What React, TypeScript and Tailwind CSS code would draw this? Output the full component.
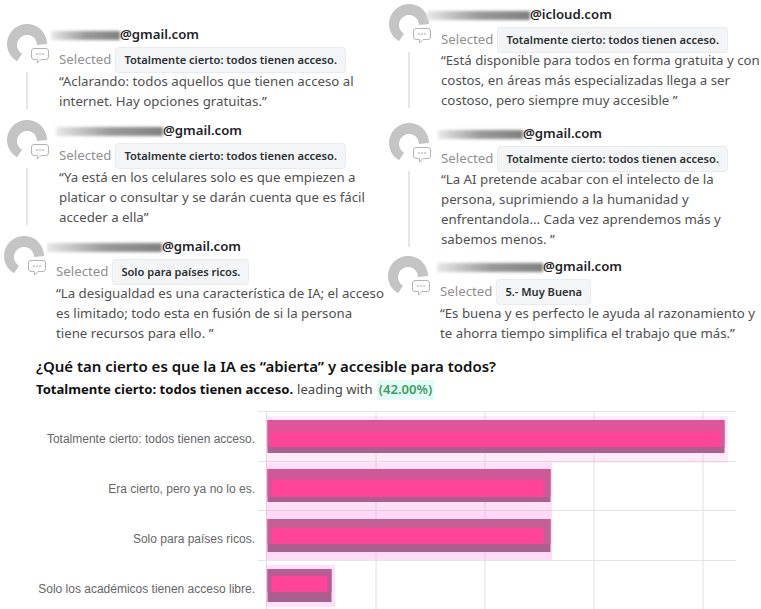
const sans = "font-['Noto_Sans',sans-serif]";

interface Response {
    wrap: string;
    nameOffset: string;
    blurWidth: string;
    quoteGap: string;
    domain: string;
    choice: string;
    quote: string[];
    thread?: boolean;
}

const leftColumn: Response[] = [
    {
        wrap: "ml-[7px] mb-[9px]",
        nameOffset: "-ml-[8px]",
        blurWidth: "w-[69px]",
        quoteGap: "-mt-[2px]",
        domain: "@gmail.com",
        choice: "Totalmente cierto: todos tienen acceso.",
        quote: ["“Aclarando: todos aquellos que tienen acceso al", "internet. Hay opciones gratuitas.”"],
        thread: true,
    },
    {
        wrap: "ml-[7px] mb-[9px]",
        nameOffset: "-ml-[3px]",
        blurWidth: "w-[107px]",
        quoteGap: "-mt-[2px]",
        domain: "@gmail.com",
        choice: "Totalmente cierto: todos tienen acceso.",
        quote: [
            "“Ya está en los celulares solo es que empiezen a",
            "platicar o consultar y se darán cuenta que es fácil",
            "acceder a ella”",
        ],
        thread: true,
    },
    {
        wrap: "ml-[4px]",
        nameOffset: "-ml-[9px]",
        blurWidth: "w-[115px]",
        quoteGap: "-mt-[2px]",
        domain: "@gmail.com",
        choice: "Solo para países ricos.",
        quote: [
            "“La desigualdad es una característica de IA; el acceso",
            "es limitado; todo esta en fusión de si la persona",
            "tiene recursos para ello. ”",
        ],
    },
];

const rightColumn: Response[] = [
    {
        wrap: "ml-[389px] mb-[13px]",
        nameOffset: "-ml-[14px]",
        blurWidth: "w-[103px]",
        quoteGap: "-mt-[3px]",
        domain: "@icloud.com",
        choice: "Totalmente cierto: todos tienen acceso.",
        quote: [
            "“Está disponible para todos en forma gratuita y con",
            "costos, en áreas más especializadas llega a ser",
            "costoso, pero siempre muy accesible ”",
        ],
        thread: true,
    },
    {
        wrap: "ml-[389px] mb-[7px]",
        nameOffset: "-ml-[3px]",
        blurWidth: "w-[85px]",
        quoteGap: "-mt-[3px]",
        domain: "@gmail.com",
        choice: "Totalmente cierto: todos tienen acceso.",
        quote: [
            "“La AI pretende acabar con el intelecto de la",
            "persona, suprimiendo a la humanidad y",
            "enfrentandola... Cada vez aprendemos más y",
            "sabemos menos. ”",
        ],
        thread: true,
    },
    {
        wrap: "ml-[388px]",
        nameOffset: "-ml-[3px]",
        blurWidth: "w-[106px]",
        quoteGap: "-mt-[2px]",
        domain: "@gmail.com",
        choice: "5.- Muy Buena",
        quote: [
            "“Es buena y es perfecto le ayuda al razonamiento y",
            "te ahorra tiempo simplifica el trabajo que más.”",
        ],
    },
];

function Avatar() {
    return (
        <div className="relative h-10 w-10 shrink-0">
            <svg viewBox="0 0 40 40" className="h-10 w-10">
                <path d="M40 20A20 20 0 1 0 10 37.3L15 29.700A10 10 0 1 1 30 21Z" fill="#c4c4c4" />
            </svg>
            <svg viewBox="0 0 20 18" className="absolute left-[23px] top-[23px] h-[18px] w-[20px]">
                <path
                    d="M4 1.500h12a2.500 2.500 0 0 1 2.500 2.500v6a2.500 2.500 0 0 1-2.500 2.500h-5l-3.500 3.500v-3.500H4A2.500 2.500 0 0 1 1.500 10V4A2.500 2.500 0 0 1 4 1.500Z"
                    fill="#ffffff"
                    stroke="#b5b5b5"
                />
                <circle cx="7" cy="7" r="0.8" fill="#9a9a9a" />
                <circle cx="10" cy="7" r="0.8" fill="#9a9a9a" />
                <circle cx="13" cy="7" r="0.8" fill="#9a9a9a" />
            </svg>
        </div>
    );
}

function ResponseItem({ item }: { item: Response }) {
    return (
        <div className={`flex ${item.wrap}`}>
            <div className="flex w-10 shrink-0 flex-col items-center">
                <Avatar />
                {item.thread && <div className="mt-2 mb-[2px] w-[2px] flex-1 bg-[#e6e6e6]" />}
            </div>
            <div className="ml-3 min-w-0 pt-[1px]">
                <div className={`flex h-5 items-center ${item.nameOffset}`}>
                    <div className={`relative z-10 h-[9px] bg-gradient-to-r from-[#e8e8e8] via-[#9a9a9a] to-[#808080] blur-[1.5px] ${item.blurWidth}`} />
                    <span className="relative z-10 text-[13.2px] font-semibold text-[#1f2328]">{item.domain}</span>
                </div>
                <div className="mt-[2px] flex h-[26px] items-center whitespace-nowrap">
                    <span className="text-[13.25px] text-[#909090]">Selected</span>
                    <span className="ml-[4px] flex h-[26px] items-center rounded border border-[#e8ebef] bg-[#f3f5f7] px-2 text-[11.1px] font-semibold text-[#2b2f33]">
                        {item.choice}
                    </span>
                </div>
                <div className={`text-[13.25px] leading-5 whitespace-nowrap text-[#505050] ${item.quoteGap}`}>
                    {item.quote.map((line) => (
                        <div key={line}>{line}</div>
                    ))}
                </div>
            </div>
        </div>
    );
}

const labels = [
    "Totalmente cierto: todos tienen acceso.",
    "Era cierto, pero ya no lo es.",
    "Solo para países ricos.",
    "Solo los académicos tienen acceso libre.",
];

// y, height and bands are all measured from the top of the plot
const bars = [
    { y: 9, width: 457, top: 12, pink: 15, rightBand: 5, tone: "#e0559a", haloY: 5, haloH: 47, haloW: 462, halo: 0.15 },
    { y: 58, width: 283, top: 11, pink: 17, rightBand: 7, tone: "#cf5898", haloY: 52, haloH: 47, haloW: 286, halo: 0.22 },
    { y: 108, width: 283, top: 9, pink: 16, rightBand: 7, tone: "#c56097", haloY: 99, haloH: 50, haloW: 286, halo: 0.25 },
    { y: 158, width: 64, top: 7, pink: 16, rightBand: 4, tone: "#b85c94", haloY: 154, haloH: 42, haloW: 69, halo: 0.2 },
];

function PlotArea() {
    return (
        <svg width="478" height="198" className="block shrink-0">
            {[0, 50, 99, 149].map((y) => (
                <line key={y} x1="0" x2="478" y1={y + 0.5} y2={y + 0.5} stroke="#e5e5e5" />
            ))}
            {[8.5, 118, 227, 336, 445].map((x) => (
                <line key={x} x1={x} x2={x} y1="0" y2="198" stroke="#e2e2e2" />
            ))}
            {bars.map((bar) => (
                <g key={bar.y}>
                    <rect x="8" y={bar.haloY} width={bar.haloW} height={bar.haloH} fill="#ff6fe0" fillOpacity={bar.halo} />
                    <rect x="9.5" y={bar.y} width={bar.width} height="33" fill="#a8608f" />
                    <rect x="9.5" y={bar.y} width={bar.width} height={bar.top + bar.pink} fill={bar.tone} />
                    <rect
                        x="13.5"
                        y={bar.y + bar.top}
                        width={bar.width - 4 - bar.rightBand}
                        height={bar.pink}
                        fill="#ff4499"
                    />
                </g>
            ))}
        </svg>
    );
}

export default function App() {
    return (
        <div className={`h-[609px] w-[761px] overflow-hidden bg-white ${sans}`}>
            <div className="relative h-[352px]">
                <div className="absolute top-[24px] left-0">
                    {leftColumn.map((item) => (
                        <ResponseItem key={item.quote[0]} item={item} />
                    ))}
                </div>
                <div className="absolute top-[4px] left-0">
                    {rightColumn.map((item) => (
                        <ResponseItem key={item.quote[0]} item={item} />
                    ))}
                </div>
            </div>
            <div className="pl-9">
                <h2 className="h-[28px] text-[15px] leading-[28px] font-semibold text-[#111]">
                    ¿Qué tan cierto es que la IA es “abierta” y accesible para todos?
                </h2>
                <p className="flex h-[20px] items-center text-[13.1px]">
                    <span className="font-bold text-[#111]">Totalmente cierto: todos tienen acceso.</span>
                    <span className="ml-1 text-[#444]">leading with</span>
                    <span className="ml-1 bg-[#e2fbf6] px-[2px] font-semibold text-[#3f9b5f]">(42.00%)</span>
                </p>
            </div>
            <div className="mt-[11px] flex">
                <div className="w-[255px] shrink-0 pt-[3px] font-['Liberation_Sans',sans-serif] text-xs text-[#666666]">
                    {labels.map((label) => (
                        <div key={label} className="flex h-[50px] items-center justify-end whitespace-nowrap">
                            {label}
                        </div>
                    ))}
                </div>
                <div className="ml-[3px]">
                    <PlotArea />
                </div>
            </div>
        </div>
    );
}
